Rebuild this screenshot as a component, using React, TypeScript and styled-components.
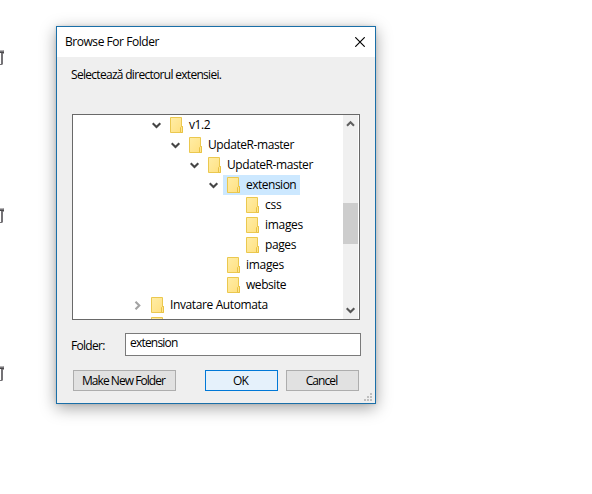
import React from "react";
import styled, { createGlobalStyle } from "styled-components";

const Global = createGlobalStyle`
  * { box-sizing: border-box; }
  body { margin: 0; background: #fff; overflow: hidden; }
`;

const Page = styled.main`
  display: flex;
  width: 592px;
  height: 494px;
  overflow: hidden;
  background: #fff;
  color: #000;
  font: 12px/20px "Open Sans", "Noto Sans", sans-serif;
`;

const Rail = styled.div`
  display: flex;
  flex-direction: column;
  gap: 142px;
  width: 56px;
  padding-top: 50px;
`;

const Icon = styled.svg`
  display: block;
  flex: none;
`;

const Label = styled.span<{ $spacing?: number }>`
  white-space: pre;
  letter-spacing: ${(p) => p.$spacing ?? 0}px;
`;

const Dialog = styled.section`
  display: flex;
  flex-direction: column;
  width: 320px;
  height: 378px;
  margin-top: 26px;
  border: 1px solid #1a6fa8;
  background: #efefef;
  box-shadow: 0 4px 15px rgba(0, 0, 0, 0.36), 0 0 3px rgba(0, 0, 0, 0.12);
`;

const TitleBar = styled.header`
  display: flex;
  justify-content: space-between;
  align-items: center;
  height: 30px;
  flex: none;
  padding: 0 10px 1px 8px;
  background: #fff;
`;

const Message = styled.p`
  height: 57px;
  flex: none;
  margin: 0;
  padding: 8px 14px 0;
`;

const TreeBox = styled.div`
  display: flex;
  flex: none;
  width: 288px;
  height: 206px;
  margin-left: 15px;
  padding-right: 1px;
  border: 1px solid #696969;
  background: #fff;
`;

const Tree = styled.div`
  flex: 1;
  height: 204px;
  overflow: hidden;
`;

const TreeRow = styled.div<{ $level: number }>`
  display: flex;
  align-items: center;
  height: 20px;
  padding-left: ${(p) => 60 + p.$level * 19}px;
`;

const Toggle = styled.span`
  display: flex;
  justify-content: center;
  width: 10px;
  margin-right: 4px;
`;

const Item = styled.span<{ $selected?: boolean }>`
  display: flex;
  align-items: center;
  gap: 5px;
  height: 20px;
  padding: 0 4px;
  background: ${(p) => (p.$selected ? "#cce8ff" : "transparent")};
`;

const ScrollBar = styled.div`
  display: flex;
  flex-direction: column;
  justify-content: space-between;
  width: 15px;
  background: #f0f0f0;
`;

const ScrollButton = styled.div`
  display: flex;
  align-items: center;
  justify-content: center;
  height: 17px;
`;

const Track = styled.div`
  flex: 1;
  padding-top: 71px;
`;

const Thumb = styled.div`
  height: 41px;
  background: #cdcdcd;
`;

const Field = styled.div`
  display: flex;
  height: 23px;
  flex: none;
  margin: 13px 14px 0;
`;

const FieldLabel = styled.div`
  width: 54px;
  padding-top: 3px;
`;

const FieldInput = styled.div`
  width: 236px;
  height: 23px;
  padding-left: 4px;
  border: 1px solid #7a7a7a;
  background: #fff;
  line-height: 18px;
`;

const Actions = styled.footer`
  display: flex;
  height: 21px;
  flex: none;
  margin: 14px 0 0 16px;
`;

const Button = styled.button<{ $width: number; $gap?: number; $primary?: boolean }>`
  width: ${(p) => p.$width}px;
  height: 21px;
  margin: 0 ${(p) => p.$gap ?? 0}px 0 0;
  padding: 0 2px 0 0;
  border: 1px solid ${(p) => (p.$primary ? "#0078d7" : "#adadad")};
  background: ${(p) => (p.$primary ? "#e5f1fb" : "#e1e1e1")};
  color: #000;
  font: inherit;
  line-height: 19px;
`;

const GripRow = styled.div`
  display: flex;
  justify-content: flex-end;
  padding: 2px 3px 0 0;
`;

const TrashIcon = () => (
  <Icon width="4" height="16" viewBox="0 0 4 16" shapeRendering="crispEdges">
    <path d="M0 0h3v1H0z" fill="#b5b3b5" />
    <path d="M3 0h1v4H3z" fill="#a5a3a5" />
    <path d="M0 1h4v1H0z" fill="#77767a" />
    <path d="M0 2h4v1H0z" fill="#4a484b" />
    <path d="M1 3h2v11H1z" fill="#747276" />
    <path d="M0 14h2v1H0z" fill="#747276" />
    <path d="M2 14h1v1H2z" fill="#b5b3b5" />
  </Icon>
);

const FolderIcon = () => (
  <Icon width="14" height="16" viewBox="0 0 14 16">
    <defs>
      <linearGradient id="paper" x1="0" y1="0" x2="1" y2="1">
        <stop stopColor="#ffeda6" />
        <stop offset="1" stopColor="#ffe080" />
      </linearGradient>
    </defs>
    <path d="M.5.5h11v9h1v6H.5z" fill="url(#paper)" stroke="#ebc84f" />
    <path d="M10.5 15.5v-5l1-1h1v6z" fill="#ffe58e" stroke="#e8c245" />
  </Icon>
);

const Chevron = ({ dir, color = "#454545" }: { dir: "down" | "up" | "right"; color?: string }) => {
  const points = {
    down: "M.7 2.2 4.5 6 8.3 2.2",
    up: "M1 6.7 4.5 3.2 8 6.7",
    right: "M2.5.7 6.3 4.5 2.5 8.3",
  };
  return (
    <Icon width="10" height="9" viewBox="0 0 10 9">
      <path d={points[dir]} fill="none" stroke={color} strokeWidth="2.1" />
    </Icon>
  );
};

const CloseIcon = () => (
  <Icon width="10" height="10" viewBox="0 0 10 10">
    <path d="m.3.3 9.4 9.4M9.7.3.3 9.7" stroke="#000" strokeWidth="1.15" />
  </Icon>
);

const GripIcon = () => (
  <Icon width="8" height="8" viewBox="0 0 8 8" shapeRendering="crispEdges">
    <path
      d="M6 0h2v2H6zM3 3h2v2H3zM6 3h2v2H6zM0 6h2v2H0zM3 6h2v2H3zM6 6h2v2H6z"
      fill="#bfbfbf"
    />
  </Icon>
);

type Node = {
  name: string;
  level: number;
  toggle?: "down" | "right";
  selected?: boolean;
  spacing?: number;
};

const nodes: Node[] = [
  { name: "v1.2", level: 1, toggle: "down", spacing: -0.4 },
  { name: "UpdateR-master", level: 2, toggle: "down", spacing: -0.42 },
  { name: "UpdateR-master", level: 3, toggle: "down", spacing: -0.42 },
  { name: "extension", level: 4, toggle: "down", selected: true, spacing: -0.5 },
  { name: "css", level: 5, spacing: -0.2 },
  { name: "images", level: 5, spacing: -0.3 },
  { name: "pages", level: 5, spacing: -0.4 },
  { name: "images", level: 4, spacing: -0.3 },
  { name: "website", level: 4, spacing: -0.45 },
  { name: "Invatare Automata", level: 0, toggle: "right", spacing: -0.38 },
  { name: "", level: 0 },
];

export default function App() {
  return (
    <Page>
      <Global />
      <Rail>
        <TrashIcon />
        <TrashIcon />
        <TrashIcon />
      </Rail>
      <Dialog>
        <TitleBar>
          <Label $spacing={-0.45}>Browse For Folder</Label>
          <CloseIcon />
        </TitleBar>
        <Message>
          <Label $spacing={-0.7}>Selectează directorul extensiei.</Label>
        </Message>
        <TreeBox>
          <Tree>
            {nodes.map((node, i) => (
              <TreeRow key={i} $level={node.level}>
                <Toggle>
                  {node.toggle && (
                    <Chevron
                      dir={node.toggle}
                      color={node.toggle === "right" ? "#a3a3a3" : "#454545"}
                    />
                  )}
                </Toggle>
                <Item $selected={node.selected}>
                  <FolderIcon />
                  <Label $spacing={node.spacing}>{node.name}</Label>
                </Item>
              </TreeRow>
            ))}
          </Tree>
          <ScrollBar>
            <ScrollButton>
              <Chevron dir="up" color="#606060" />
            </ScrollButton>
            <Track>
              <Thumb />
            </Track>
            <ScrollButton>
              <Chevron dir="down" color="#555" />
            </ScrollButton>
          </ScrollBar>
        </TreeBox>
        <Field>
          <FieldLabel>
            <Label $spacing={-0.7}>Folder:</Label>
          </FieldLabel>
          <FieldInput>
            <Label $spacing={-0.8}>extension</Label>
          </FieldInput>
        </Field>
        <Actions>
          <Button $width={103} $gap={29}>
            <Label $spacing={-0.95}>Make New Folder</Label>
          </Button>
          <Button $width={73} $gap={8} $primary>
            <Label $spacing={-0.9}>OK</Label>
          </Button>
          <Button $width={73}>
            <Label $spacing={-0.9}>Cancel</Label>
          </Button>
        </Actions>
        <GripRow>
          <GripIcon />
        </GripRow>
      </Dialog>
    </Page>
  );
}
